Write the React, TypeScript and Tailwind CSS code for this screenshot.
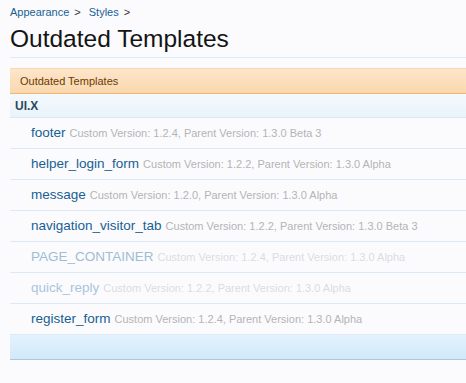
import React from 'react';

type Template = {
  name: string;
  custom: string;
  parent: string;
  faded?: 'strong' | 'light';
};

const templates: Template[] = [
  { name: 'footer', custom: '1.2.4', parent: '1.3.0 Beta 3' },
  { name: 'helper_login_form', custom: '1.2.2', parent: '1.3.0 Alpha' },
  { name: 'message', custom: '1.2.0', parent: '1.3.0 Alpha' },
  { name: 'navigation_visitor_tab', custom: '1.2.2', parent: '1.3.0 Beta 3' },
  { name: 'PAGE_CONTAINER', custom: '1.2.4', parent: '1.3.0 Alpha', faded: 'strong' },
  { name: 'quick_reply', custom: '1.2.2', parent: '1.3.0 Alpha', faded: 'light' },
  { name: 'register_form', custom: '1.2.4', parent: '1.3.0 Alpha' },
];

export default function App() {
  return (
    <div
      className="min-h-[383px] bg-[#fbfbfe] pl-[10px] overflow-hidden"
      style={{ fontFamily: '"Liberation Sans", Arial, sans-serif' }}
    >
      {/* Breadcrumb */}
      <div className="pt-[4px] h-[19px] flex items-center text-[11px] leading-[14px] text-[#176093]">
        <span>Appearance</span>
        <span className="ml-[5px] text-[#333]">&gt;</span>
        <span className="ml-[8px]">Styles</span>
        <span className="ml-[5px] text-[#333]">&gt;</span>
      </div>

      {/* Title */}
      <h1 className="h-[39px] pt-[6px] text-[24.5px] leading-[28px] text-[#141414] border-b border-[#d7edfc]">
        Outdated Templates
      </h1>

      {/* Panel */}
      <div className="mt-[10px] w-[470px]">
        <div className="h-[26px] flex items-center pl-[10px] text-[11px] text-[#6b3a00] bg-gradient-to-b from-[#fde6cb] to-[#f9d8ae] border-t border-[#fbd7ac] border-b border-b-[#f4b46a]">
          Outdated Templates
        </div>

        <div className="h-[24px] flex items-center pl-[5px] text-[12px] font-bold text-[#2b485c] bg-gradient-to-b from-[#f4f9fd] to-[#eaf3fb] border-b border-[#d7e9f7]">
          UI.X
        </div>

        {templates.map((t) => {
          const nameColor =
            t.faded === 'strong' ? 'text-[#a0bdd2]' : t.faded === 'light' ? 'text-[#a9c5da]' : 'text-[#176093]';
          const infoColor = t.faded ? 'text-[#dcdce0]' : 'text-[#b4b4b4]';
          return (
            <div
              key={t.name}
              className="h-[31px] flex items-center pl-[21px] pt-[1px] border-b border-[#dbeaf6] whitespace-nowrap"
            >
              <span className={`text-[13.5px] ${nameColor}`}>{t.name}</span>
              <span className={`ml-[4px] text-[11px] ${infoColor}`}>
                Custom Version: {t.custom}, Parent Version: {t.parent}
              </span>
            </div>
          );
        })}

        <div className="h-[25px] bg-gradient-to-b from-[#e3f2fd] to-[#d2e9f9] border-b border-[#a9c8de]" />
      </div>
    </div>
  );
}
